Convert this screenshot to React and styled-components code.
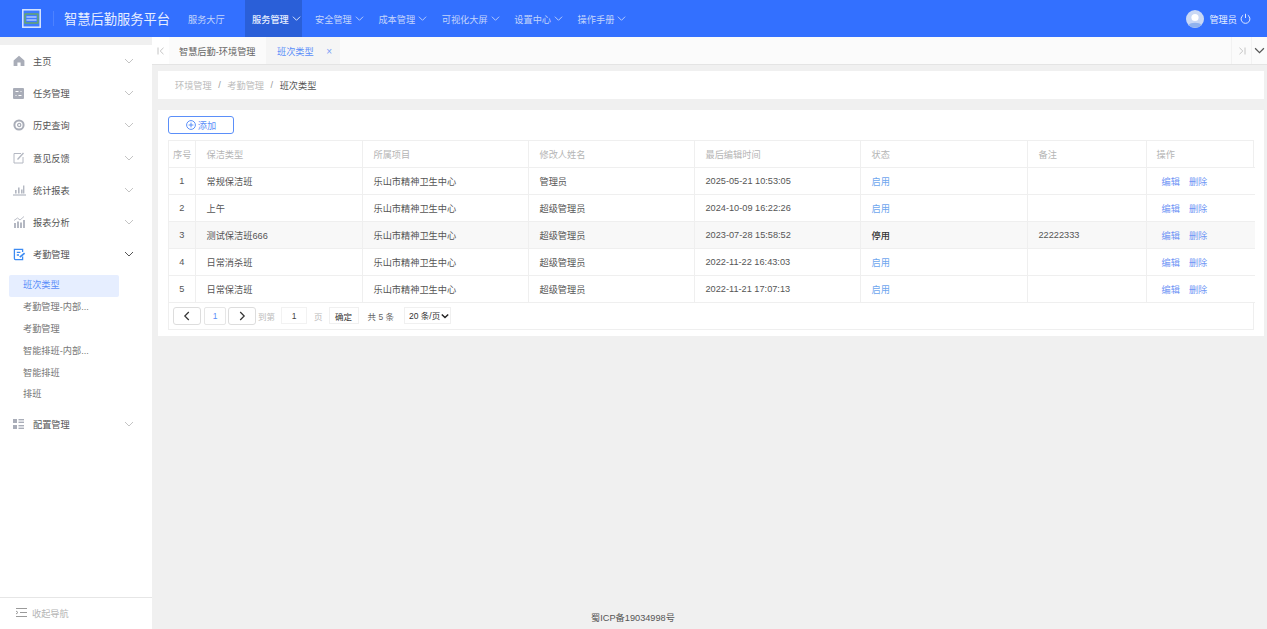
import React from "react";
import styled, { createGlobalStyle } from "styled-components";

const navItems = ["安全管理", "成本管理", "可视化大屏", "设置中心", "操作手册"];

const Chevron = ({ size = 10, color = "currentColor", width = 1 }) => (
  <svg width={size} height={size} viewBox="0 0 10 10" fill="none">
    <path d="M1 3l4 4 4-4" stroke={color} strokeWidth={width} />
  </svg>
);

const HomeIcon = () => (
  <svg width="12" height="12" viewBox="0 0 12 12" fill="#a9adb8">
    <path d="M6 .8L11.4 5.4V11H7.6V7.6H4.4V11H.6V5.4z" />
  </svg>
);
const TaskIcon = () => (
  <svg width="11" height="11" viewBox="0 0 11 11">
    <rect width="11" height="11" rx="1" fill="#a9adb8" />
    <path d="M2.5 3.5h3M7.5 3.5h1M2.5 7.5h1M5.5 7.5h3" stroke="#fff" strokeWidth="1" />
  </svg>
);
const HistoryIcon = () => (
  <svg width="12" height="12" viewBox="0 0 12 12" fill="none">
    <circle cx="6" cy="6" r="4.6" stroke="#a9adb8" strokeWidth="2" />
    <circle cx="6.2" cy="6" r="1.6" stroke="#a9adb8" strokeWidth="1.3" />
  </svg>
);
const FeedbackIcon = () => (
  <svg width="12" height="12" viewBox="0 0 12 12" fill="none" stroke="#b4b8c2">
    <path d="M8 1.5H1V11h9V5" />
    <path d="M4.5 7.5L10.5 1" strokeWidth="1.4" />
  </svg>
);
const StatIcon = () => (
  <svg width="13" height="12" viewBox="0 0 13 12" fill="#b4b8c2">
    <rect x="2" y="6" width="1.6" height="3.5" />
    <rect x="5" y="3.5" width="1.6" height="6" />
    <rect x="8" y="5.5" width="1.6" height="4" />
    <rect x="10" y="1.5" width="1.4" height="8" />
    <rect y="10.4" width="13" height="1.2" />
  </svg>
);
const AnalysisIcon = () => (
  <svg width="12" height="12" viewBox="0 0 12 12" fill="#b4b8c2">
    <rect x="1" y="7" width="2" height="5" />
    <rect x="4" y="5.5" width="2" height="6.5" />
    <rect x="7" y="6.5" width="2" height="5.5" />
    <rect x="10" y="4" width="2" height="8" />
    <path d="M1 4.5L4.5 2l2.5 2 4-3.5" fill="none" stroke="#b4b8c2" strokeWidth=".9" />
  </svg>
);
const AttendanceIcon = () => (
  <svg width="13" height="13" viewBox="0 0 13 13" fill="none" stroke="#3d8bf2" strokeWidth="1.3">
    <path d="M9.6 8.6V11.6H2.4A1 1 0 0 1 1.4 10.6V1.4H9.6V4" />
    <path d="M3.8 4.4H7.4M3.8 7H6" />
    <path d="M6.8 9.2L11.6 5.2" strokeWidth="1.7" />
  </svg>
);
const ConfigIcon = () => (
  <svg width="11" height="10" viewBox="0 0 11 10" fill="#a9adb8">
    <rect width="4" height="4" />
    <rect y="6" width="4" height="4" />
    <rect x="5.5" width="5.5" height="1.4" />
    <rect x="5.5" y="2.6" width="5.5" height="1.4" />
    <rect x="5.5" y="6" width="5.5" height="1.4" />
    <rect x="5.5" y="8.6" width="5.5" height="1.4" />
  </svg>
);
const CollapseIcon = () => (
  <svg width="11" height="9" viewBox="0 0 11 9" fill="none" stroke="#9a9a9a">
    <path d="M0 .5H11M4 4.5H11M0 8.5H11" />
    <path d="M0 3l2 1.5L0 6" />
  </svg>
);

const menuItems = [
  { name: "主页", icon: <HomeIcon /> },
  { name: "任务管理", icon: <TaskIcon /> },
  { name: "历史查询", icon: <HistoryIcon /> },
  { name: "意见反馈", icon: <FeedbackIcon /> },
  { name: "统计报表", icon: <StatIcon /> },
  { name: "报表分析", icon: <AnalysisIcon /> },
];

const subItems = ["考勤管理-内部...", "考勤管理", "智能排班-内部...", "智能排班", "排班"];

const rows = [
  ["1", "常规保洁班", "管理员", "2025-05-21 10:53:05", "启用", ""],
  ["2", "上午", "超级管理员", "2024-10-09 16:22:26", "启用", ""],
  ["3", "测试保洁班666", "超级管理员", "2023-07-28 15:58:52", "停用", "22222333"],
  ["4", "日常消杀班", "超级管理员", "2022-11-22 16:43:03", "启用", ""],
  ["5", "日常保洁班", "超级管理员", "2022-11-21 17:07:13", "启用", ""],
];

const colWidths = [26, 167, 166, 166, 166, 167, 119, 109];
const heads = ["序号", "保洁类型", "所属项目", "修改人姓名", "最后编辑时间", "状态", "备注", "操作"];

const App = () => {
  return (
    <Page>
      <GlobalStyle />
      <Header>
        <Logo>
          <svg width="19" height="19" viewBox="0 0 19 19" fill="none">
            <rect x=".8" y=".8" width="17.4" height="17.4" fill="#3f7bff" stroke="#dce8ff" strokeWidth="1.5" />
            <rect x="3" y="5" width="13" height="9" stroke="#6fb04a" strokeWidth="1.2" />
            <path d="M4.5 8h10M4.5 11h10" stroke="#e8f0ff" strokeWidth="1.2" />
          </svg>
        </Logo>
        <Divider />
        <Title>智慧后勤服务平台</Title>
        <Nav>
          <NavItem $plain>服务大厅</NavItem>
          <NavActive>
            服务管理
            <Chevron size={9} />
          </NavActive>
          {navItems.map((item) => (
            <NavItem key={item}>
              {item}
              <Chevron size={9} />
            </NavItem>
          ))}
        </Nav>
        <User>
          <Avatar>
            <svg width="18" height="18" viewBox="0 0 18 18">
              <circle cx="9" cy="9" r="9" fill="#c9d8f5" />
              <circle cx="9" cy="7.5" r="3.6" fill="#fff" />
              <path d="M2.6 15.2C4 12 14 12 15.4 15.2A9 9 0 0 1 2.6 15.2z" fill="#8fb2ee" />
            </svg>
          </Avatar>
          <UserName>管理员</UserName>
          <svg width="11" height="11" viewBox="0 0 11 11" fill="none" stroke="#dfe8ff">
            <path d="M3.2 2.2A4.4 4.4 0 1 0 7.8 2.2M5.5 .8V5" />
          </svg>
        </User>
      </Header>
      <Body>
        <Sidebar>
          <Menu>
            {menuItems.map((m) => (
              <MenuRow key={m.name}>
                <MenuIcon>{m.icon}</MenuIcon>
                <MenuName>{m.name}</MenuName>
                <Chevron color="#c4c4c4" />
              </MenuRow>
            ))}
            <MenuRow>
              <MenuIcon>
                <AttendanceIcon />
              </MenuIcon>
              <MenuName>考勤管理</MenuName>
              <Chevron color="#555" />
            </MenuRow>
            <SubMenu>
              <SubActive>班次类型</SubActive>
              {subItems.map((s) => (
                <SubItem key={s}>{s}</SubItem>
              ))}
            </SubMenu>
            <MenuRow>
              <MenuIcon>
                <ConfigIcon />
              </MenuIcon>
              <MenuName>配置管理</MenuName>
              <Chevron color="#c4c4c4" />
            </MenuRow>
          </Menu>
          <CollapseBar>
            <CollapseIcon />
            收起导航
          </CollapseBar>
        </Sidebar>
        <Main>
          <TabBar>
            <TabEnd>
              <svg width="8" height="8" viewBox="0 0 8 8" fill="none" stroke="#c4c4c4">
                <path d="M1 .5v7M6.5 .8L3.2 4l3.3 3.2" />
              </svg>
            </TabEnd>
            <Tab>智慧后勤-环境管理</Tab>
            <TabActive>
              班次类型
              <TabClose>×</TabClose>
            </TabActive>
            <TabRight>
              <TabEnd $left $w="20px">
                <svg width="8" height="8" viewBox="0 0 8 8" fill="none" stroke="#c4c4c4">
                  <path d="M7 .5v7M1.5 .8L4.8 4 1.5 7.2" />
                </svg>
              </TabEnd>
              <TabEnd $left $w="16px">
                <Chevron size={11} color="#555" width={1.1} />
              </TabEnd>
            </TabRight>
          </TabBar>
          <Crumbs>
            <CrumbLight>环境管理</CrumbLight>
            <CrumbSep>/</CrumbSep>
            <CrumbLight>考勤管理</CrumbLight>
            <CrumbSep>/</CrumbSep>
            <CrumbCurrent>班次类型</CrumbCurrent>
          </Crumbs>
          <Card>
            <AddButton>
              <svg width="10" height="10" viewBox="0 0 10 10" fill="none" stroke="#5b8ff9">
                <circle cx="5" cy="5" r="4.4" />
                <path d="M5 2.6v4.8M2.6 5h4.8" />
              </svg>
              添加
            </AddButton>
            <TableBox>
              <Table>
                <colgroup>
                  {colWidths.map((w, i) => (
                    <col key={i} width={w} />
                  ))}
                </colgroup>
                <thead>
                  <tr>
                    {heads.map((h, i) => (
                      <Th key={h} $narrow={i === 0}>
                        {h}
                      </Th>
                    ))}
                  </tr>
                </thead>
                <tbody>
                  {rows.map((r) => (
                    <Row key={r[0]} $hover={r[0] === "3"}>
                      <Td $center>{r[0]}</Td>
                      <Td>{r[1]}</Td>
                      <Td>乐山市精神卫生中心</Td>
                      <Td>{r[2]}</Td>
                      <Td>{r[3]}</Td>
                      <Td $state={r[4]}>{r[4]}</Td>
                      <Td>{r[5]}</Td>
                      <Td>
                        <Ops>
                          <span>编辑</span>
                          <span>删除</span>
                        </Ops>
                      </Td>
                    </Row>
                  ))}
                </tbody>
              </Table>
              <Pager>
                <PageArrow>
                  <svg width="10" height="10" viewBox="0 0 10 10" fill="none" stroke="#333" strokeWidth="1.2">
                    <path d="M6.8 1L2.8 5l4 4" />
                  </svg>
                </PageArrow>
                <PageNum>1</PageNum>
                <PageArrow>
                  <svg width="10" height="10" viewBox="0 0 10 10" fill="none" stroke="#333" strokeWidth="1.2">
                    <path d="M3.2 1l4 4-4 4" />
                  </svg>
                </PageArrow>
                <PagerHint>到第</PagerHint>
                <PageInput>1</PageInput>
                <PagerHint>页</PagerHint>
                <Confirm>确定</Confirm>
                <Total>共 5 条</Total>
                <SizeBox>
                  <SizeSelect defaultValue="20">
                    <option value="20">20 条/页</option>
                  </SizeSelect>
                  <SizeArrow>
                    <Chevron size={8} color="#222" width={1.8} />
                  </SizeArrow>
                </SizeBox>
              </Pager>
            </TableBox>
          </Card>
          <Footer>蜀ICP备19034998号</Footer>
        </Main>
      </Body>
    </Page>
  );
};

export default App;

const GlobalStyle = createGlobalStyle`
  html, body {
    margin: 0;
    padding: 0;
    height: 100%;
    overflow: hidden;
  }
  body {
    font-family: "Liberation Sans", "Noto Sans CJK SC", sans-serif;
    background: #f0f0f0;
  }
  * {
    box-sizing: border-box;
  }
`;

const Page = styled.div`
  width: 1267px;
  height: 629px;
  display: flex;
  flex-direction: column;
  overflow: hidden;
`;
const Header = styled.div`
  height: 37px;
  flex: none;
  background: #3370ff;
  display: flex;
  align-items: center;
  padding-left: 22px;
`;
const Logo = styled.div`
  width: 19px;
  height: 19px;
  display: flex;
`;
const Divider = styled.div`
  width: 1px;
  height: 15px;
  background: #4d82ff;
  margin-left: 12px;
`;
const Title = styled.div`
  margin-left: 10px;
  width: 117px;
  font-size: 13.25px;
  color: #e6eeff;
  white-space: nowrap;
`;
const Nav = styled.div`
  display: flex;
  height: 100%;
`;
const NavItem = styled.div`
  display: flex;
  align-items: center;
  gap: 3px;
  height: 100%;
  font-size: 9.2px;
  color: #c4d5fb;
  padding: 0 7.3px 0 7px;
  margin-right: ${(p) => (p.$plain ? "13px" : "0.3px")};
  white-space: nowrap;
`;
const NavActive = styled(NavItem)`
  background: #2a5fd8;
  color: #e8efff;
  font-weight: 500;
  width: 57px;
  padding: 0 0 0 7px;
  margin-right: 6px;
`;
const User = styled.div`
  margin-left: auto;
  margin-right: 16px;
  display: flex;
  align-items: center;
`;
const Avatar = styled.div`
  width: 18px;
  height: 18px;
  display: flex;
`;
const UserName = styled.div`
  font-size: 9.2px;
  color: #e6eeff;
  margin: 0 3px 0 5px;
`;
const Body = styled.div`
  flex: 1;
  display: flex;
  min-height: 0;
`;
const Sidebar = styled.div`
  width: 152px;
  flex: none;
  background: #fff;
  display: flex;
  flex-direction: column;
  margin-top: 8px;
`;
const Menu = styled.div`
  flex: 1;
`;
const MenuRow = styled.div`
  height: 32.2px;
  display: flex;
  align-items: center;
  padding: 0 18px 0 13px;
`;
const MenuIcon = styled.div`
  width: 20px;
  display: flex;
  align-items: center;
`;
const MenuName = styled.div`
  flex: 1;
  font-size: 9.2px;
  color: #555;
`;
const SubMenu = styled.div`
  padding: 5px 0 2px 9px;
`;
const SubItem = styled.div`
  height: 21.8px;
  width: 110px;
  line-height: 21.8px;
  padding-left: 14px;
  font-size: 9.2px;
  color: #777;
  white-space: nowrap;
`;
const SubActive = styled(SubItem)`
  background: #e6eeff;
  border-radius: 2px;
  color: #5b8ff9;
`;
const CollapseBar = styled.div`
  height: 32px;
  flex: none;
  border-top: 1px solid #e6e6e6;
  display: flex;
  align-items: center;
  gap: 5px;
  padding: 0 0 2px 16px;
  font-size: 9.2px;
  color: #b5b5b5;
`;
const Main = styled.div`
  flex: 1;
  min-width: 0;
  display: flex;
  flex-direction: column;
`;
const TabBar = styled.div`
  height: 28px;
  flex: none;
  display: flex;
  background: #fbfbfb;
  border-bottom: 1px solid #e4e4e4;
`;
const TabEnd = styled.div`
  width: ${(p) => p.$w || "17px"};
  display: flex;
  align-items: center;
  justify-content: center;
  background: ${(p) => (p.$left ? "#fbfbfb" : "#fff")};
  border-left: ${(p) => (p.$left ? "1px solid #f2f2f2" : "0")};
`;
const Tab = styled.div`
  display: flex;
  align-items: center;
  width: 97px;
  padding-left: 10px;
  font-size: 9.2px;
  color: #666;
  white-space: nowrap;
`;
const TabActive = styled(Tab)`
  width: 74px;
  padding-left: 11px;
  background: #f5f5f5;
  color: #5b8ff9;
  justify-content: space-between;
  padding-right: 8px;
`;
const TabClose = styled.span`
  font-size: 10px;
  line-height: 10px;
  padding-top: 2px;
  color: #7a9ff5;
`;
const TabRight = styled.div`
  margin-left: auto;
  display: flex;
`;
const Crumbs = styled.div`
  height: 28px;
  flex: none;
  margin: 6px 3px 0 6px;
  padding-left: 17px;
  background: #fff;
  display: flex;
  align-items: center;
  font-size: 9.2px;
`;
const CrumbLight = styled.span`
  color: #bdbdbd;
`;
const CrumbSep = styled.span`
  color: #999;
  margin: 0 6.5px;
`;
const CrumbCurrent = styled.span`
  color: #555;
`;
const Card = styled.div`
  height: 226px;
  flex: none;
  margin: 11px 3px 0 6px;
  padding: 6px 10px 0;
  background: #fff;
`;
const AddButton = styled.div`
  width: 66px;
  height: 18px;
  border: 1px solid #5b8ff9;
  border-radius: 3px;
  color: #5b8ff9;
  font-size: 9.2px;
  display: flex;
  align-items: center;
  justify-content: center;
  gap: 2px;
`;
const TableBox = styled.div`
  margin-top: 6px;
  width: 1086px;
  border: 1px solid #efefef;
`;
const Table = styled.table`
  width: 100%;
  table-layout: fixed;
  border-collapse: collapse;
`;
const Th = styled.th`
  height: 26px;
  padding: 0 0 0 ${(p) => (p.$narrow ? "4px" : "11px")};
  font-size: 9.2px;
  font-weight: 400;
  color: #b5b5b5;
  text-align: left;
  border-left: 1px solid #efefef;
  border-bottom: 1px solid #efefef;
  white-space: nowrap;
  &:first-child {
    border-left: 0;
  }
  &:last-child {
    padding-left: 10px;
  }
`;
const Row = styled.tr`
  background: ${(p) => (p.$hover ? "#f8f8f8" : "#fff")};
`;
const Td = styled.td`
  height: 27px;
  padding: 0 0 0 ${(p) => (p.$center ? "0" : "11px")};
  font-size: 9.2px;
  text-align: ${(p) => (p.$center ? "center" : "left")};
  color: ${(p) => (p.$state === "启用" ? "#6ea6ee" : p.$state === "停用" ? "#333" : "#555")};
  font-weight: ${(p) => (p.$state === "停用" ? 500 : 400)};
  border-left: 1px solid #efefef;
  border-bottom: 1px solid #efefef;
  white-space: nowrap;
  &:first-child {
    border-left: 0;
  }
  &:last-child {
    padding-left: 10px;
  }
`;
const Ops = styled.div`
  display: flex;
  gap: 9px;
  padding-left: 5px;
  color: #6f95f5;
`;
const Pager = styled.div`
  height: 26px;
  display: flex;
  align-items: center;
  padding-left: 4px;
  font-size: 8.5px;
`;
const PageArrow = styled.div`
  width: 28px;
  height: 18px;
  border: 1px solid #ddd;
  border-radius: 3px;
  display: flex;
  align-items: center;
  justify-content: center;
`;
const PageNum = styled.div`
  width: 22px;
  height: 18px;
  margin: 0 2px 0 3px;
  border: 1px solid #e6e6e6;
  border-radius: 2px;
  color: #5b8ff9;
  display: flex;
  align-items: center;
  justify-content: center;
`;
const PagerHint = styled.div`
  color: #bbb;
  margin: 0 6px 0 2px;
`;
const PageInput = styled.div`
  width: 26px;
  height: 17px;
  border: 1px solid #f2f2f2;
  color: #444;
  display: flex;
  align-items: center;
  justify-content: center;
  margin-right: 5px;
`;
const Confirm = styled.div`
  width: 30px;
  height: 17px;
  border: 1px solid #f0f0f0;
  color: #333;
  display: flex;
  align-items: center;
  justify-content: center;
  margin-right: 9px;
`;
const Total = styled.div`
  color: #666;
  margin-right: 10px;
`;
const SizeBox = styled.div`
  position: relative;
  width: 47px;
  height: 17px;
`;
const SizeSelect = styled.select`
  width: 100%;
  height: 100%;
  appearance: none;
  border: 1px solid #f0f0f0;
  background: #fff;
  color: #333;
  font-size: 8.5px;
  font-family: inherit;
  padding: 0 0 0 4px;
  outline: none;
`;
const SizeArrow = styled.span`
  position: absolute;
  right: 2px;
  top: 5px;
  display: flex;
`;
const Footer = styled.div`
  margin-top: auto;
  height: 23px;
  padding: 4px 153px 0 0;
  text-align: center;
  font-size: 9.2px;
  color: #555;
`;
